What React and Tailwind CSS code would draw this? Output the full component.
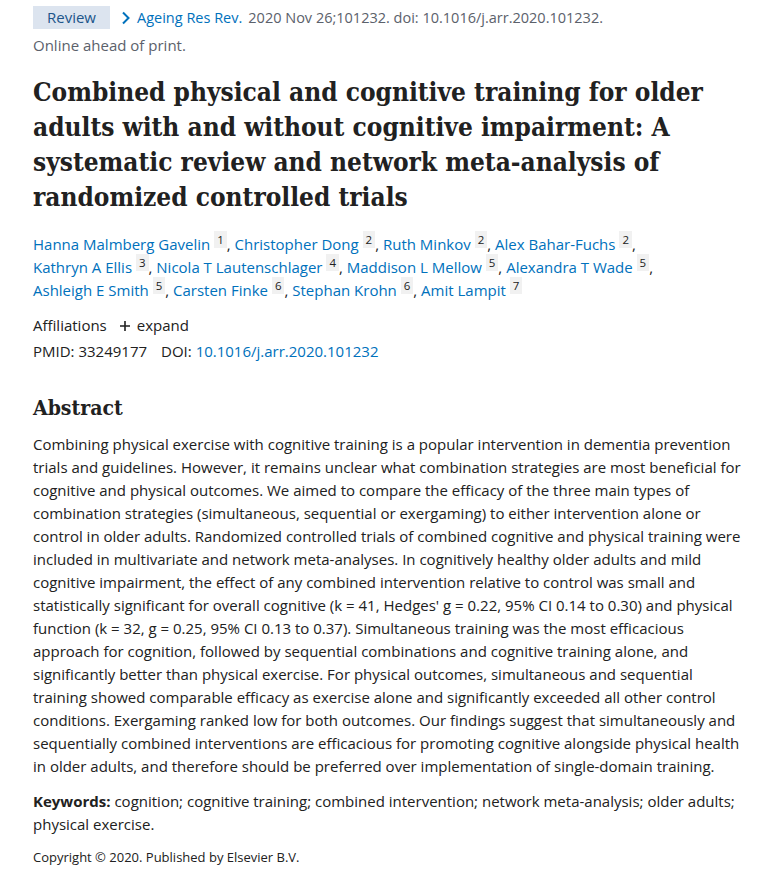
import React from "react";

const authors = [
  ["Hanna Malmberg Gavelin", "1"],
  ["Christopher Dong", "2"],
  ["Ruth Minkov", "2"],
  ["Alex Bahar-Fuchs", "2"],
  ["Kathryn A Ellis", "3"],
  ["Nicola T Lautenschlager", "4"],
  ["Maddison L Mellow", "5"],
  ["Alexandra T Wade", "5"],
  ["Ashleigh E Smith", "5"],
  ["Carsten Finke", "6"],
  ["Stephan Krohn", "6"],
  ["Amit Lampit", "7"],
];

const sans = "font-['Segoe_UI','Open_Sans',sans-serif]";
const serif = "font-['DejaVu_Serif_Condensed','DejaVu_Serif',serif] [font-stretch:semi-condensed]";

export default function App() {
  return (
    <div className={`bg-white min-h-[875px] w-[780px] pl-[33px] pr-[35px] text-[#212121] ${sans}`}>
      {/* header */}
      <div className="pt-[6px] flex items-center gap-[11px]">
        <span className="bg-[#dce4ef] text-[#20558a] text-[15px] h-[23px] w-[77px] flex items-center justify-center">
          Review
        </span>
        <span className="flex items-center gap-[6px] text-[14.5px]">
          <svg width="10" height="14" viewBox="0 0 10 14" className="text-[#0071bc]">
            <path d="M2 1.5 L7.5 7 L2 12.5" fill="none" stroke="currentColor" strokeWidth="2" />
          </svg>
          <a className="text-[#0071bc]">Ageing Res Rev.</a>
          <span className="text-[#5b616b]">2020 Nov 26;101232. doi: 10.1016/j.arr.2020.101232.</span>
        </span>
      </div>
      <div className="text-[#5b616b] text-[15px] leading-[23px] mt-[5px]">Online ahead of print.</div>

      <h1 className={`${serif} font-bold text-[26px] leading-[35px] mt-[18px] text-[#212121]`}>
        Combined physical and cognitive training for older adults with and without cognitive impairment: A
        systematic review and network meta-analysis of randomized controlled trials
      </h1>

      <div className="mt-[18px] text-[15px] leading-[23px] text-[#0071bc]">
        {authors.map(([name, n], i) => (
          <React.Fragment key={name}>
            <span className="whitespace-nowrap">
              <a>{name}</a>{" "}
              <sup className="bg-[#f1f1f1] text-[#212121] text-[11.5px] px-[3px] py-[1px] top-[-6px]">{n}</sup>
              {i < authors.length - 1 ? <span className="text-[#212121]">,</span> : null}
            </span>{" "}
          </React.Fragment>
        ))}
      </div>

      <div className="mt-[12px] text-[15px] leading-[23px] flex items-center gap-[12px]">
        <span>Affiliations</span>
        <span className="flex items-center gap-[6px]">
          <svg width="12" height="12" viewBox="0 0 12 12">
            <path d="M6 1 V11 M1 6 H11" stroke="#212121" strokeWidth="1.6" />
          </svg>
          expand
        </span>
      </div>
      <div className="mt-[3px] text-[15px] leading-[23px]">
        <span>PMID: 33249177</span>
        <span className="ml-[14px]">DOI: </span>
        <a className="text-[#0071bc]">10.1016/j.arr.2020.101232</a>
      </div>

      <h2 className={`${serif} font-bold text-[21px] leading-[30px] mt-[30px]`}>Abstract</h2>
      <p className="mt-[10px] text-[15px] leading-[23px]">
        Combining physical exercise with cognitive training is a popular intervention in dementia prevention
        trials and guidelines. However, it remains unclear what combination strategies are most beneficial for
        cognitive and physical outcomes. We aimed to compare the efficacy of the three main types of
        combination strategies (simultaneous, sequential or exergaming) to either intervention alone or control
        in older adults. Randomized controlled trials of combined cognitive and physical training were included
        in multivariate and network meta-analyses. In cognitively healthy older adults and mild cognitive
        impairment, the effect of any combined intervention relative to control was small and statistically
        significant for overall cognitive (k = 41, Hedges' g = 0.22, 95% CI 0.14 to 0.30) and physical function
        (k = 32, g = 0.25, 95% CI 0.13 to 0.37). Simultaneous training was the most efficacious approach for
        cognition, followed by sequential combinations and cognitive training alone, and significantly better
        than physical exercise. For physical outcomes, simultaneous and sequential training showed comparable
        efficacy as exercise alone and significantly exceeded all other control conditions. Exergaming ranked
        low for both outcomes. Our findings suggest that simultaneously and sequentially combined
        interventions are efficacious for promoting cognitive alongside physical health in older adults, and
        therefore should be preferred over implementation of single-domain training.
      </p>
      <p className="mt-[12px] text-[15px] leading-[23px]">
        <strong className="font-bold">Keywords:</strong> cognition; cognitive training; combined intervention;
        network meta-analysis; older adults; physical exercise.
      </p>
      <p className="mt-[10px] text-[13px] leading-[23px]">Copyright © 2020. Published by Elsevier B.V.</p>
    </div>
  );
}
